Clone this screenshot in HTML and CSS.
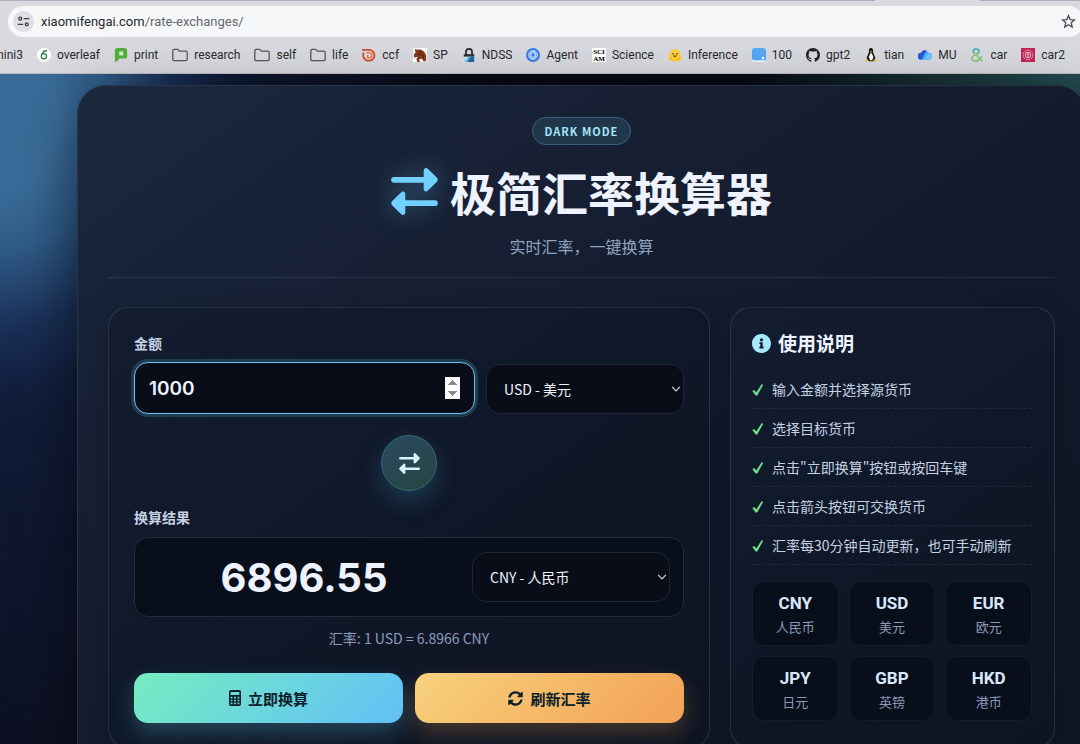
FILE: index.html
```html
<!DOCTYPE html>
<html lang="zh-CN">
<head>
    <meta charset="UTF-8">
    <meta name="viewport" content="width=device-width, initial-scale=1.0">
    <title>极简汇率换算器</title>
    <link rel="stylesheet" href="styles.css">
</head>
<body>
    <!-- Iconos compartidos -->
    <svg class="sprite" aria-hidden="true">
        <symbol id="exchange" viewBox="0 0 46 46">
            <path d="M3 8.700h29V2.500C32 .3 34.500-.8 36.200.9l8.800 8.700q1.500 1.900 0 3.800l-8.800 8.700c-1.700 1.700-4.200.6-4.200-1.600v-6.100H3q-2.900-.2-2.900-2.850T3 8.700z"/>
            <path d="M43 31.600H14v-6.100c0-2.200-2.500-3.300-4.200-1.600L1 32.600q-1.500 1.900 0 3.800l8.800 8.700c1.700 1.700 4.200.6 4.200-1.600v-6.200h29q2.900-.2 2.900-2.850T43 31.600z"/>
        </symbol>
        <symbol id="folder" viewBox="0 0 16 16">
            <path d="M.8 3.600c0-.8.5-1.300 1.300-1.300h3.600l1.700 1.800h6.500c.8 0 1.300.5 1.300 1.300v6.900c0 .8-.5 1.300-1.300 1.300H2.100c-.8 0-1.300-.5-1.300-1.300z" fill="none" stroke="#55585d" stroke-width="1.300"/>
        </symbol>
        <symbol id="check" viewBox="0 0 12 14">
            <path d="M.3 9 2.300 7.900 4.300 10.400 9.600 2.200 11.200 2.800 5.200 13.600H3.600z" fill="#6ee08a"/>
        </symbol>
        <symbol id="chevron" viewBox="0 0 10 6">
            <path d="M1.200 1 5 4.800 8.800 1" fill="none" stroke="#c9cfd9" stroke-width="1.200"/>
        </symbol>
    </svg>

    <header class="browser">
        <div class="tab-edge"><span></span><span></span></div>
        <div class="address-bar">
            <button class="site-info" aria-label="site info">
                <svg viewBox="0 0 16 16" fill="none" stroke="#3c3f44" stroke-width="1.6" stroke-linecap="round">
                    <circle cx="4" cy="4.5" r="1.8"/><path d="M9 4.5h5.5M1.5 11.5H7"/><circle cx="12" cy="11.5" r="1.8"/>
                </svg>
            </button>
            <div class="url">xiaomifengai.com<span>/rate-exchanges/</span></div>
            <button class="star" aria-label="bookmark">
                <svg viewBox="0 0 16 16" fill="none" stroke="#4a4d52" stroke-width="1.4"><path d="M8 1.8l1.8 4.2 4.6.4-3.500 3 1.100 4.500L8 11.500l-4 2.400 1.100-4.500-3.500-3 4.600-.4z"/></svg>
            </button>
        </div>
        <nav class="bookmarks">
            <a href="#" class="clipped">mini3</a>
            <a href="#">
                <svg viewBox="0 0 16 16"><circle cx="8" cy="8" r="8" fill="#fff"/><path d="M11.500 3C8 3 4.800 6 4.800 9.500a3 3 0 1 0 3-3c-1 0-2 .500-2.500 1.500M7 3c1 .8 2.500.8 4.500 0" fill="none" stroke="#2f7d46" stroke-width="1.400"/></svg>overleaf</a>
            <a href="#">
                <svg viewBox="0 0 16 16"><path d="M4 0h8q3 0 3 3v6q0 3-3 3H6q-1 3-5 4V3q0-3 3-3z" fill="#52b13c"/><path d="M6 4h4.500v4.500H6z" fill="#d9f2d0"/></svg>print</a>
            <a href="#"><svg class="folder"><use href="#folder"/></svg>research</a>
            <a href="#"><svg class="folder"><use href="#folder"/></svg>self</a>
            <a href="#"><svg class="folder"><use href="#folder"/></svg>life</a>
            <a href="#">
                <svg viewBox="0 0 16 16" fill="none" stroke="#cf4a28" stroke-width="2"><path d="M0 2h8a6 6 0 0 1 0 12.500H5M1.500 5v5.500L5 14.500"/><path d="M5 5.500h3.500a2.800 2.800 0 0 1 0 5.600H6.500V8" stroke="#ee7a48" stroke-width="1.700"/></svg>ccf</a>
            <a href="#">
                <svg viewBox="0 0 16 16"><path d="M0 0h16v16H0z" fill="#fff"/><path d="M2 1l3 1c5-1 9 2 10 7v6h-3l-2-3-3 1 1 3H5l-1-3 1-3-4 1V7l2-2z" fill="#8a3b20"/><path d="M7 4c3 1 5 4 5 8M5 7l4 1" stroke="#3c170c" fill="none"/></svg>SP</a>
            <a href="#">
                <svg viewBox="0 0 16 16"><path d="M4.500 8V4.500a3.500 3.500 0 0 1 7 0V8" fill="none" stroke="#28292b" stroke-width="2"/><path d="M2 7h12v3H2z" fill="#303438"/><path d="M2 10h12l-1 6H4z" fill="#72bfe8"/><path d="M6 16l4-6h4v6z" fill="#226aa0"/><path d="M2 11l4-1-1 4z" fill="#e8f6ff"/></svg>NDSS</a>
            <a href="#">
                <svg viewBox="0 0 16 16"><circle cx="8" cy="8" r="8" fill="#377df0"/><g fill="none" stroke="#dceaff" stroke-width=".8"><circle cx="8" cy="8" r="5.200"/><ellipse cx="8" cy="8" rx="4.800" ry="2.400"/><ellipse cx="8" cy="8" rx="4.800" ry="2.400" transform="rotate(60 8 8)"/><ellipse cx="8" cy="8" rx="4.800" ry="2.400" transform="rotate(120 8 8)"/></g></svg>Agent</a>
            <a href="#">
                <svg viewBox="0 0 16 16"><path d="M0 0h16v16H0z" fill="#fff"/><text x="8" y="7" class="sciam">SCI</text><text x="8" y="15" class="sciam">AM</text></svg>Science</a>
            <a href="#">
                <svg viewBox="0 0 16 16"><path d="M8 1a6.500 6.500 0 0 1 6.500 6.500l.8 5q-.8 2.500-4 2.500H4.700q-3.200 0-4-2.500l.8-5A6.500 6.500 0 0 1 8 1z" fill="#ffd03c"/><path d="M2 10.500l3.500 4M14 10.500l-3.500 4" stroke="#f2aa2c"/><circle cx="5.700" cy="6.500" r=".9" fill="#45331c"/><circle cx="10.300" cy="6.500" r=".9" fill="#45331c"/><path d="M5.800 8.500h4.400q-2.200 3.500-4.400 0z" fill="#5a3420"/></svg>Inference</a>
            <a href="#">
                <svg viewBox="0 0 16 16"><rect width="16" height="16" rx="3" fill="#eef6ff"/><path d="M3 0h10q3 0 3 3v11H3q-3 0-3-3V3q0-3 3-3z" fill="#55a9f5"/><circle cx="12.500" cy="11.500" r="1.600" fill="#fff"/></svg>100</a>
            <a href="#">
                <svg viewBox="0 0 16 16"><path fill="#202328" d="M8 0C3.580 0 0 3.580 0 8c0 3.540 2.290 6.530 5.470 7.590.4.070.550-.17.550-.38 0-.19-.01-.82-.01-1.490-2.010.37-2.530-.49-2.690-.94-.09-.23-.48-.94-.82-1.130-.28-.15-.68-.52-.01-.53.630-.01 1.080.58 1.230.82.720 1.210 1.870.87 2.330.66.070-.52.280-.87.510-1.070-1.780-.2-3.640-.89-3.640-3.950 0-.87.310-1.590.82-2.150-.08-.2-.36-1.020.08-2.120 0 0 .67-.21 2.200.82.640-.18 1.320-.27 2-.27s1.360.09 2 .27c1.530-1.040 2.200-.82 2.200-.82.440 1.100.160 1.920.08 2.120.510.56.82 1.270.82 2.150 0 3.070-1.870 3.750-3.650 3.950.290.25.540.73.540 1.480 0 1.070-.01 1.930-.01 2.200 0 .21.150.46.550.38A8 8 0 0 0 16 8c0-4.420-3.580-8-8-8z"/></svg>gpt2</a>
            <a href="#">
                <svg viewBox="0 0 16 16"><path d="M8 0C5.500 0 5.500 2.500 5.600 5L3 11l2 4h6l2-4-2.600-6C10.500 2.500 10.500 0 8 0z" fill="#191a1c"/><path d="M8 5l-2.500 5L7 14h2.500l1.300-4z" fill="#fff"/><path d="M6.500 3.800h3L8 5.500zM2.500 12l4 3.500H1.500zM13.500 12l-4 3.500h5z" fill="#f6bd2d"/></svg>tian</a>
            <a href="#">
                <svg viewBox="0 0 16 16"><path d="M4 13.500a4 4 0 0 1-.5-8A5 5 0 0 1 12 5.500a4 4 0 0 1 .5 8z" fill="#4aa9f8"/><path d="M4 13.500a4 4 0 0 1-.5-8A5 5 0 0 1 10 3C6.500 6 6 10.500 4 13.500z" fill="#2458d4"/><path d="M7 13.500l5-8a4 4 0 0 1 .5 8z" fill="#6cc6fb"/></svg>MU</a>
            <a href="#">
                <svg viewBox="0 0 16 16" fill="none" stroke-width="2"><path d="M14 15L5 6C2 2.500 5 1 7 1s5 2 2 5L4 9c-4 3-1 6 2 6 4 0 7-3 7-6" stroke="#8bc878"/><path d="M5 6C2 2.500 5 1 7 1s5 2 2 5" stroke="#55b9bd"/></svg>car</a>
            <a href="#">
                <svg viewBox="0 0 16 16"><path d="M0 0h16v16H0z" fill="#c22759"/><g fill="none" stroke="#f6cbd8"><circle cx="8" cy="8" r="5.500" stroke-dasharray="2 1"/><circle cx="8" cy="8" r="3.200"/><path d="M8 5v6M6.500 7h3"/></g></svg>car2</a>
        </nav>
    </header>

    <main class="page">
        <div class="container">
            <div class="hero">
                <span class="badge">DARK MODE</span>
                <h1><svg class="hero-icon"><use href="#exchange"/></svg>极简汇率换算器</h1>
                <p>实时汇率，一键换算</p>
            </div>

            <div class="columns">
                <section class="panel converter">
                    <label for="amount">金额</label>
                    <div class="amount-row">
                        <input type="number" id="amount" class="amount" value="1000">
                        <div class="currency">
                            <select id="from" aria-label="源货币">
                                <option>USD - 美元</option>
                                <option>CNY - 人民币</option>
                            </select>
                            <svg><use href="#chevron"/></svg>
                        </div>
                    </div>

                    <button class="swap" aria-label="交换货币"><svg><use href="#exchange"/></svg></button>

                    <label for="to">换算结果</label>
                    <div class="result">
                        <output class="result-value">6896.55</output>
                        <div class="currency">
                            <select id="to">
                                <option>CNY - 人民币</option>
                                <option>USD - 美元</option>
                            </select>
                            <svg><use href="#chevron"/></svg>
                        </div>
                    </div>
                    <p class="rate">汇率: 1 USD = 6.8966 CNY</p>

                    <div class="actions">
                        <button class="btn btn-convert">
                            <svg class="calc" viewBox="0 0 384 512"><path fill-rule="evenodd" d="M64 0h256q64 0 64 64v384q0 64-64 64H64q-64 0-64-64V64Q0 0 64 0zm-12 64v96h280V64zm0 150v56h60v-56zm110 0v56h60v-56zm110 0v56h60v-56zM52 308v52h60v-52zm110 0v52h60v-52zm110 0v52h60v-52zM52 398v56h60v-56zm110 0v56h60v-56zm110 0v56h60v-56z"/></svg>立即换算</button>
                        <button class="btn btn-refresh">
                            <svg viewBox="0 0 512 512"><path d="M370.720 133.280C339.458 104.008 298.888 87.962 255.848 88c-77.458.068-144.328 53.178-162.791 126.850-1.344 5.363-6.122 9.150-11.651 9.150H24.103c-7.498 0-13.194-6.807-11.807-14.176C33.933 94.924 134.813 8 256 8c66.448 0 126.791 26.136 171.315 68.685L463.030 40.970C478.149 25.851 504 36.559 504 57.941V192c0 13.255-10.745 24-24 24H345.941c-21.382 0-32.090-25.851-16.971-40.971l41.750-41.749zM32 296h134.059c21.382 0 32.090 25.851 16.971 40.971l-41.750 41.750c31.262 29.273 71.835 45.319 114.876 45.280 77.418-.07 144.315-53.144 162.787-126.849 1.344-5.363 6.122-9.150 11.651-9.150h57.304c7.498 0 13.194 6.807 11.807 14.176C478.067 417.076 377.187 504 256 504c-66.448 0-126.791-26.136-171.315-68.685L48.970 471.030C33.851 486.149 8 475.441 8 454.059V320c0-13.255 10.745-24 24-24z"/></svg>刷新汇率</button>
                    </div>
                </section>

                <aside class="panel guide">
                    <h2><svg viewBox="8 8 496 496"><path d="M256 8C119.043 8 8 119.083 8 256c0 136.997 111.043 248 248 248s248-111.003 248-248C504 119.083 392.957 8 256 8zm0 110c23.196 0 42 18.804 42 42s-18.804 42-42 42-42-18.804-42-42 18.804-42 42-42zm56 254c0 6.627-5.373 12-12 12h-88c-6.627 0-12-5.373-12-12v-24c0-6.627 5.373-12 12-12h12v-64h-12c-6.627 0-12-5.373-12-12v-24c0-6.627 5.373-12 12-12h64c6.627 0 12 5.373 12 12v100h12c6.627 0 12 5.373 12 12v24z"/></svg>使用说明</h2>
                    <ul class="steps">
                        <li><svg><use href="#check"/></svg>输入金额并选择源货币</li>
                        <li><svg><use href="#check"/></svg>选择目标货币</li>
                        <li><svg><use href="#check"/></svg>点击"立即换算"按钮或按回车键</li>
                        <li><svg><use href="#check"/></svg>点击箭头按钮可交换货币</li>
                        <li><svg><use href="#check"/></svg>汇率每30分钟自动更新，也可手动刷新</li>
                    </ul>
                    <div class="tiles">
                        <div class="tile"><strong>CNY</strong><span>人民币</span></div>
                        <div class="tile"><strong>USD</strong><span>美元</span></div>
                        <div class="tile"><strong>EUR</strong><span>欧元</span></div>
                        <div class="tile"><strong>JPY</strong><span>日元</span></div>
                        <div class="tile"><strong>GBP</strong><span>英镑</span></div>
                        <div class="tile"><strong>HKD</strong><span>港币</span></div>
                    </div>
                </aside>
            </div>
        </div>
    </main>
</body>
</html>
```
FILE: styles.css
```css
* {
    box-sizing: border-box;
    margin: 0;
    padding: 0;
}
body {
    font-family: "Noto Sans CJK SC", sans-serif;
    background: #0a0e1a;
    color: #eef3ff;
    height: 100vh;
    display: flex;
    flex-direction: column;
    overflow: hidden;
}
button, input, select {
    font-family: inherit;
}
button {
    cursor: pointer;
}
.sprite {
    display: none;
}

/* Barra del navegador */
.browser {
    flex: none;
    height: 74px;
    background: #d9dadf;
    border-bottom: 1px solid #bcbcc2;
    font-family: Roboto, sans-serif;
    color: #27292d;
    overflow: hidden;
}
.tab-edge {
    display: flex;
    justify-content: space-between;
    height: 1px;
}
.tab-edge span {
    background: #aeadbb;
    width: 100px;
}
.tab-edge span:first-child {
    width: 81%;
}
.address-bar {
    display: flex;
    align-items: center;
    height: 31px;
    margin: 5px -4px 0 8px;
    padding: 0 8px 0 5px;
    border-radius: 16px;
    background: #f6f7f9;
}
.site-info {
    display: flex;
    align-items: center;
    justify-content: center;
    width: 21px;
    height: 21px;
    border: none;
    border-radius: 50%;
    background: #dddfe4;
}
.site-info svg {
    width: 13px;
    height: 13px;
}
.url {
    flex: 1;
    margin-left: 7px;
    font-size: 13px;
}
.url span {
    color: #65686d;
}
.star {
    border: none;
    background: none;
    height: 15px;
}
.star svg {
    width: 15px;
    height: 15px;
}
.bookmarks {
    display: flex;
    align-items: center;
    gap: 14px;
    height: 35px;
}
.bookmarks a {
    flex: none;
    display: flex;
    align-items: center;
    gap: 6px;
    font-size: 12px;
    color: inherit;
    text-decoration: none;
}
.bookmarks a.clipped {
    width: 23px;
    justify-content: flex-end;
}
.bookmarks svg {
    width: 14px;
    height: 14px;
}
.bookmarks .folder {
    width: 16px;
    height: 16px;
}
.sciam {
    font: bold 8px "Liberation Serif", serif;
    text-anchor: middle;
}

/* Fondo de la pagina */
.page {
    flex: 1;
    padding: 11px 0 0 77px;
    background:
        repeating-linear-gradient(90deg, transparent 0 31px, rgba(160, 190, 255, 0.02) 31px 32px),
        repeating-linear-gradient(0deg, transparent 0 24px, rgba(160, 190, 255, 0.01) 24px 25px),
        radial-gradient(ellipse 260px 300px at 0 50px, #3a6c99 22%, rgba(52, 100, 146, 0.85) 42%, rgba(32, 64, 108, 0.5) 68%, rgba(22, 40, 80, 0.2) 88%, transparent),
        radial-gradient(circle at 100% 0, #234b4f, transparent 340px),
        radial-gradient(circle at 0 20%, #15244a, transparent 520px),
        linear-gradient(180deg, #070a13, #0e1124);
}
.container {
    min-height: 720px;
    margin-right: -6px;
    padding: 31px 30px;
    border: 1px solid rgba(148, 180, 215, 0.18);
    border-radius: 28px;
    background: linear-gradient(145deg, #1c283e, #161e31 35%, #111a2b 60%, #101625);
    box-shadow: 0 20px 60px rgba(0, 0, 0, 0.5);
}
.hero {
    display: flex;
    flex-direction: column;
    align-items: center;
    padding-bottom: 19px;
    border-bottom: 1px solid rgba(148, 170, 205, 0.14);
}
.badge {
    height: 28px;
    padding: 0 12px;
    border: 1px solid #34627a;
    border-radius: 14px;
    background: #20374b;
    color: #a5e5fb;
    font-size: 11px;
    font-weight: 700;
    line-height: 26px;
    letter-spacing: 1px;
}
h1 {
    display: flex;
    align-items: center;
    gap: 12px;
    margin-top: 14px;
    font-size: 46px;
    font-weight: 700;
    line-height: 64px;
}
.hero-icon {
    width: 47px;
    height: 47px;
    fill: #72d0ff;
    filter: drop-shadow(0 0 12px rgba(90, 190, 250, 0.45));
}
.hero p {
    margin-top: 11px;
    font-size: 16px;
    line-height: 24px;
    color: #94a3bf;
}

.columns {
    display: grid;
    grid-template-columns: 602fr 325fr;
    gap: 20px;
    margin-top: 29px;
}
.panel {
    border: 1px solid rgba(148, 180, 215, 0.17);
    border-radius: 20px;
    background: linear-gradient(145deg, #141d30, #0f1828 50%, #0e1422);
    box-shadow: 0 8px 24px rgba(4, 8, 20, 0.25);
}
.converter {
    padding: 24px 25px;
}
.converter label {
    display: block;
    font-size: 14px;
    font-weight: 700;
    line-height: 22px;
    color: #c5d0e3;
}
.amount-row {
    display: flex;
    align-items: flex-end;
    gap: 11px;
    margin-top: 8px;
}
.amount {
    flex: 1;
    min-width: 0;
    height: 52px;
    padding: 0 14px;
    border: 1px solid #67c4f3;
    border-radius: 14px;
    outline: none;
    background: #080d18;
    box-shadow: 0 0 0 3px #213b50;
    color: #eef3ff;
    font-family: Inter, sans-serif;
    font-size: 19px;
    font-weight: 600;
}
.amount::-webkit-inner-spin-button {
    opacity: 1;
}
.currency {
    display: grid;
    align-items: center;
    width: 198px;
    height: 50px;
}
.currency select,
.currency svg {
    grid-area: 1 / 1;
}
.currency select {
    height: 50px;
    padding: 0 17px;
    border: 1px solid #1e2634;
    border-radius: 14px;
    appearance: none;
    background: #080d18;
    color: #eef3ff;
    font-size: 14px;
}
.currency svg {
    justify-self: end;
    width: 10px;
    height: 6px;
    margin-right: 3px;
    pointer-events: none;
}
.swap {
    display: flex;
    align-items: center;
    justify-content: center;
    width: 56px;
    height: 56px;
    margin: 21px auto 15px;
    border: 1px solid #386a7e;
    border-radius: 50%;
    background: linear-gradient(145deg, #294a63, #27443f);
    box-shadow: 0 10px 24px rgba(70, 150, 190, 0.28);
}
.swap svg {
    width: 21px;
    height: 21px;
    fill: #d3f5ff;
}
.result {
    display: flex;
    align-items: center;
    gap: 12px;
    margin-top: 9px;
    height: 80px;
    padding: 0 13px;
    border: 1px solid #212b3a;
    border-radius: 14px;
    background: #080e1a;
}
.result-value {
    flex: 1;
    text-align: center;
    font-family: Inter, sans-serif;
    font-size: 40px;
    font-weight: 700;
}
.rate {
    margin-top: 10px;
    font-size: 14px;
    line-height: 22px;
    text-align: center;
    color: #8e9cba;
}
.actions {
    display: grid;
    grid-template-columns: 1fr 1fr;
    gap: 12px;
    margin-top: 24px;
}
.btn {
    display: flex;
    align-items: center;
    justify-content: center;
    gap: 7px;
    height: 50px;
    border: none;
    border-radius: 14px;
    color: #08202a;
    font-size: 15px;
    font-weight: 700;
}
.btn svg {
    height: 15px;
    width: 15px;
    fill: currentColor;
}
.btn .calc {
    width: 12px;
    height: 16px;
}
.btn-convert {
    background: linear-gradient(135deg, #76edc0, #61c0f8);
    box-shadow: 0 10px 22px rgba(90, 190, 220, 0.28);
}
.btn-refresh {
    background: linear-gradient(135deg, #f8d27c, #f2a155);
    box-shadow: 0 10px 22px rgba(240, 165, 85, 0.24);
}

.guide {
    padding: 20px 22px 20px 21px;
}
.guide h2 {
    display: flex;
    align-items: center;
    gap: 7px;
    font-size: 19px;
    font-weight: 700;
    line-height: 30px;
}
.guide h2 svg {
    width: 19px;
    height: 19px;
    fill: #a6e8ff;
}
.steps {
    margin-top: 12px;
    list-style: none;
}
.steps li {
    display: flex;
    align-items: center;
    gap: 8px;
    height: 39px;
    border-bottom: 1px dashed #1e2b3b;
    font-size: 14px;
    color: #c6d1e4;
}
.steps svg {
    width: 12px;
    height: 14px;
}
.tiles {
    display: grid;
    grid-template-columns: repeat(3, 1fr);
    gap: 10px;
    margin-top: 16px;
}
.tile {
    display: flex;
    flex-direction: column;
    align-items: center;
    justify-content: center;
    height: 65px;
    border: 1px solid #111e2b;
    border-radius: 12px;
    background: #080f1b;
}
.tile strong {
    font-family: Roboto, sans-serif;
    font-size: 17px;
    line-height: 26px;
    color: #dae7fb;
}
.tile span {
    font-size: 13px;
    line-height: 22px;
    color: #8b99b7;
}
```
